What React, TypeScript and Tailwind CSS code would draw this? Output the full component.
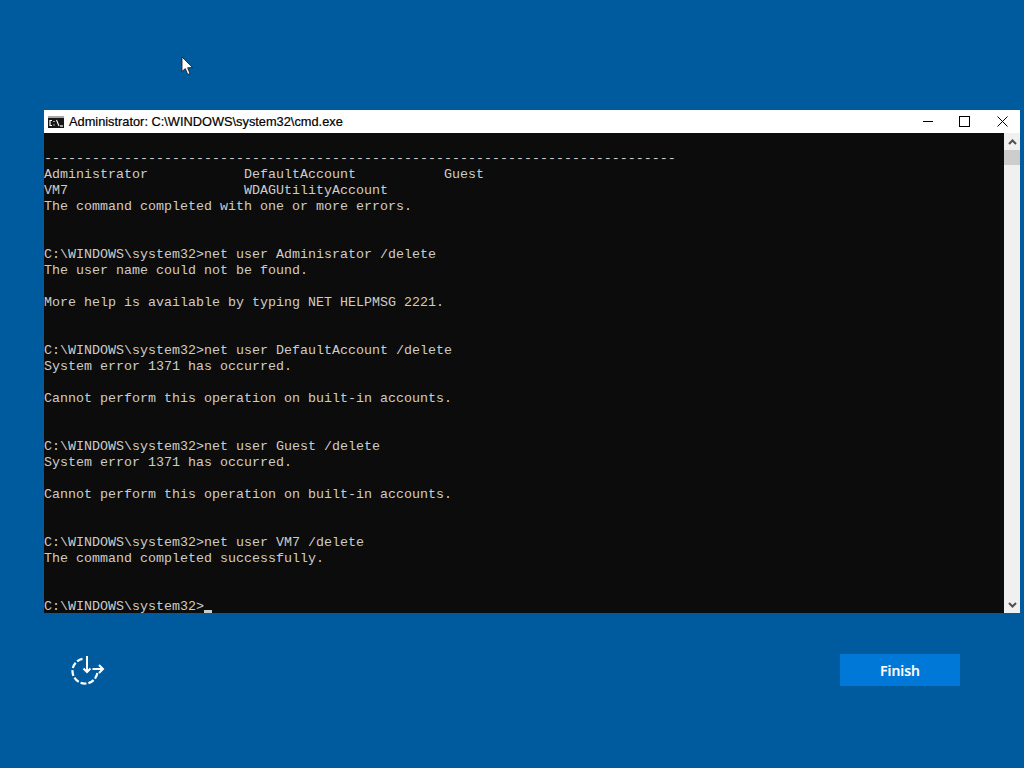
const lines = [
  "",
  "-------------------------------------------------------------------------------",
  "Administrator            DefaultAccount           Guest",
  "VM7                      WDAGUtilityAccount",
  "The command completed with one or more errors.",
  "",
  "",
  "C:\\WINDOWS\\system32>net user Adminisrator /delete",
  "The user name could not be found.",
  "",
  "More help is available by typing NET HELPMSG 2221.",
  "",
  "",
  "C:\\WINDOWS\\system32>net user DefaultAccount /delete",
  "System error 1371 has occurred.",
  "",
  "Cannot perform this operation on built-in accounts.",
  "",
  "",
  "C:\\WINDOWS\\system32>net user Guest /delete",
  "System error 1371 has occurred.",
  "",
  "Cannot perform this operation on built-in accounts.",
  "",
  "",
  "C:\\WINDOWS\\system32>net user VM7 /delete",
  "The command completed successfully.",
  "",
  "",
];

export default function App() {
  return (
    <div className="relative w-[1024px] h-[768px] overflow-hidden bg-[#005a9e] pt-[110px] pl-[44px] flex flex-col">
      <svg className="absolute left-[181px] top-[56px]" width="13" height="20" viewBox="0 0 13 20">
        <path d="M1 1 L1 15.5 L4.3 12.6 L6.8 18.5 L9 17.5 L6.6 11.8 L11.5 11.5 Z" fill="#ffffff" stroke="#10141c" strokeWidth="0.8" />
      </svg>

      <div className="w-[976px] h-[503px] flex flex-col">
        <div className="h-[23px] bg-white flex items-center shrink-0">
          <svg className="ml-[4px] shrink-0" width="16" height="12" viewBox="0 0 16 12">
            <rect x="0" y="0" width="16" height="12" fill="#161616" />
            <rect x="0" y="0" width="16" height="2" fill="#a8a8a8" />
            <path d="M4 4.5 H2 V9.5 H4" stroke="#ffffff" strokeWidth="1.2" fill="none" />
            <path d="M6 5 V6 M6 8.5 V9.5" stroke="#ffffff" strokeWidth="1.2" fill="none" />
            <path d="M8.5 4 L11 10" stroke="#ffffff" strokeWidth="1.1" fill="none" />
            <path d="M12 10 H15" stroke="#ffffff" strokeWidth="1.2" fill="none" />
          </svg>
          <span className="ml-[5px] pt-[1px] font-['Liberation_Sans',sans-serif] text-[12.8px] [-webkit-text-stroke:0.2px_black] text-black whitespace-pre">Administrator: C:\WINDOWS\system32\cmd.exe</span>
          <div className="ml-auto flex items-center h-full">
            <div className="w-[32px] h-full flex items-center justify-center">
              <div className="w-[10px] h-px bg-black" />
            </div>
            <div className="w-[40px] h-full flex items-center justify-center">
              <div className="w-[11px] h-[11px] border border-black" />
            </div>
            <div className="w-[36px] h-full flex items-center justify-center">
              <svg width="11" height="11" viewBox="0 0 11 11">
                <path d="M0.5 0.5 L10.5 10.5 M10.5 0.5 L0.5 10.5" stroke="#000" strokeWidth="1" fill="none" />
              </svg>
            </div>
          </div>
        </div>
        <div className="flex flex-1 min-h-0">
          <div className="flex-1 bg-[#0c0c0c] pt-[2px] font-['Liberation_Mono',monospace] text-[13.33px] leading-[16px] text-[#cccccc] overflow-hidden">
            {lines.map((l, i) => (
              <div key={i} className="h-[16px] whitespace-pre">{l}</div>
            ))}
            <div className="h-[16px] whitespace-pre flex">
              <span>C:\WINDOWS\system32&gt;</span>
              <span className="w-[8px] h-[3px] bg-[#cccccc] mt-[11px]" />
            </div>
          </div>
          <div className="w-[16px] bg-[#f0f0f0] flex flex-col shrink-0">
            <div className="h-[17px] flex items-center justify-center shrink-0">
              <svg width="9" height="6" viewBox="0 0 9 6"><path d="M1 5 L4.5 1.5 L8 5" stroke="#505050" strokeWidth="2" fill="none" /></svg>
            </div>
            <div className="h-[15px] bg-[#cdcdcd] shrink-0" />
            <div className="flex-1" />
            <div className="h-[17px] flex items-center justify-center shrink-0">
              <svg width="9" height="6" viewBox="0 0 9 6"><path d="M1 1 L4.5 4.5 L8 1" stroke="#505050" strokeWidth="2" fill="none" /></svg>
            </div>
          </div>
        </div>
      </div>

      <div className="w-[916px] mt-[41px] flex items-start">
        <svg className="ml-[26px] mt-[2px]" width="36" height="32" viewBox="0 0 36 32" fill="none" stroke="#ffffff">
          <path d="M12.5 2.8 A12.5 12.5 0 1 0 27.5 15" strokeWidth="2.2" strokeDasharray="6 2" />
          <path d="M17 0 V16" strokeWidth="2" />
          <path d="M13.5 12.5 L17 16 L20.5 12.5" strokeWidth="2" />
          <path d="M22.5 13 H33" strokeWidth="2" />
          <path d="M29 9 L33 13 L29 17" strokeWidth="2" />
        </svg>
        <button className="ml-auto w-[120px] h-[32px] bg-[#0078d7] text-white font-['Open_Sans',sans-serif] font-semibold text-[14px] [-webkit-text-stroke:0.2px_white] flex items-center justify-center">Finish</button>
      </div>
    </div>
  );
}
